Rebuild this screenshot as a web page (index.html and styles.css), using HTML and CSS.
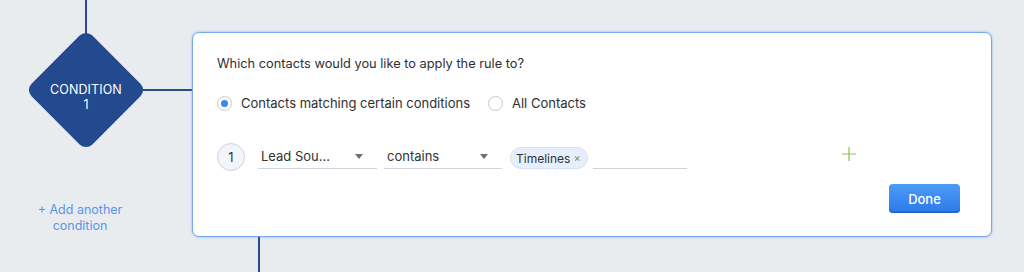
FILE: index.html
```html
<!DOCTYPE html>
<html>
<head>
<meta charset="utf-8">
<link rel="stylesheet" href="styles.css">
</head>
<body>
<div class="canvas">
  <div class="flow">
    <div class="vline-top"></div>
    <div class="node-row">
      <div class="diamond-box">
        <div class="diamond"></div>
        <div class="diamond-label">CONDITION<br>1</div>
      </div>
      <div class="hline"></div>
    </div>
    <a class="add-link">+ Add another<br>condition</a>
  </div>
  <div class="main">
    <div class="card">
      <p class="question">Which contacts would you like to apply the rule to?</p>
      <div class="radios">
        <label class="radio"><span class="radio-dot checked"></span>Contacts matching certain conditions</label>
        <label class="radio"><span class="radio-dot"></span>All Contacts</label>
      </div>
      <div class="cond-row">
        <span class="num">1</span>
        <div class="select sel-field"><span>Lead Sou...</span><span class="caret"></span></div>
        <div class="select sel-op"><span>contains</span><span class="caret"></span></div>
        <div class="chip">Timelines <span class="chip-x">×</span></div>
        <div class="value-input"></div>
        <svg class="plus" width="14" height="14" viewBox="0 0 14 14"><path d="M7 0V14M0 7H14" stroke="#8cc152" stroke-width="1.2" fill="none"/></svg>
      </div>
      <div class="actions"><button class="done">Done</button></div>
    </div>
    <div class="vline-bottom"></div>
  </div>
</div>
</body>
</html>
```

FILE: styles.css
```css
* { box-sizing: border-box; }
html, body { margin: 0; padding: 0; }
body {
  width: 1024px;
  height: 272px;
  overflow: hidden;
  background: #e9ecef;
  font-family: Inter, "Noto Sans", sans-serif;
  color: #333;
}
.canvas {
  display: flex;
  height: 272px;
}
.flow {
  width: 192px;
  display: flex;
  flex-direction: column;
}
.vline-top {
  width: 2px;
  height: 36px;
  margin-left: 85px;
  background: #2c4a8c;
}
.node-row {
  display: flex;
  align-items: center;
  height: 112px;
  margin-top: -2px;
}
.diamond-box {
  width: 114px;
  height: 114px;
  margin-left: 29px;
  position: relative;
  display: flex;
  align-items: center;
  justify-content: center;
}
.diamond {
  position: absolute;
  width: 86px;
  height: 86px;
  border-radius: 9px;
  background: #234a8e;
  transform: rotate(45deg);
}
.diamond-label {
  position: relative;
  top: 7px;
  color: #fff;
  font-size: 12.5px;
  line-height: 15px;
  text-align: center;
  letter-spacing: 0.1px;
}
.hline {
  flex: 1;
  height: 2px;
  background: #2c4a8c;
}
.add-link {
  display: block;
  width: 160px;
  margin-top: 56px;
  text-align: center;
  color: #5a94ea;
  font-size: 12.5px;
  line-height: 15.5px;
}
.main {
  display: flex;
  flex-direction: column;
  width: 800px;
  padding-top: 32px;
}
.card {
  width: 800px;
  height: 205px;
  background: #fff;
  border: 1px solid #76a6ef;
  border-radius: 7px;
  box-shadow: 0 0 3px rgba(90, 150, 240, 0.6);
  padding: 22px 31px 0 24px;
}
.question {
  margin: 0;
  font-size: 12.8px;
  line-height: 18px;
  color: #2f2f33;
}
.radios {
  display: flex;
  gap: 18px;
  margin-top: 21px;
  font-size: 13px;
  line-height: 18px;
}
.radio {
  display: flex;
  align-items: center;
  gap: 9px;
  color: #2f2f33;
}
.radio-dot {
  width: 15px;
  height: 15px;
  border-radius: 50%;
  border: 1.5px solid #c8c9cc;
  display: flex;
  align-items: center;
  justify-content: center;
}
.radio-dot.checked::after {
  content: "";
  width: 7px;
  height: 7px;
  border-radius: 50%;
  background: #3d85f0;
}
.cond-row {
  display: flex;
  align-items: center;
  margin-top: 31px;
  height: 28px;
  font-size: 13px;
}
.num {
  width: 28px;
  height: 28px;
  border-radius: 50%;
  border: 1px solid #cdd2dc;
  background: #f3f5fa;
  display: flex;
  align-items: center;
  justify-content: center;
  color: #333;
  font-size: 13px;
}
.select {
  align-self: flex-start;
  display: flex;
  align-items: center;
  justify-content: space-between;
  height: 25px;
  margin-top: 1px;
  padding: 0 14px 0 3px;
  border-bottom: 1px solid #cfd2d8;
  color: #333;
}
.sel-field { width: 119px; margin-left: 13px; }
.sel-op { width: 118px; margin-left: 7px; }
.caret {
  width: 0;
  height: 0;
  border-left: 4px solid transparent;
  border-right: 4px solid transparent;
  border-top: 5px solid #6e7076;
}
.chip {
  align-self: flex-start;
  margin-left: 8px;
  margin-top: 4px;
  height: 22px;
  padding: 0 6px 0 5px;
  border-radius: 11px;
  background: #e7effc;
  border: 1px solid #d3e0f5;
  display: flex;
  align-items: center;
  gap: 3px;
  color: #333;
  font-size: 12px;
}
.chip-x {
  color: #888;
  font-size: 11px;
}
.value-input {
  align-self: flex-start;
  width: 94px;
  height: 25px;
  margin-top: 1px;
  margin-left: 5px;
  border-bottom: 1px solid #cfd2d8;
}
.plus {
  margin-left: 155px;
  margin-top: -6px;
}
.actions {
  display: flex;
  justify-content: flex-end;
  margin-top: 13px;
}
.done {
  width: 71px;
  height: 29px;
  border: none;
  border-radius: 4px;
  background: linear-gradient(#4b9cf6, #2d79e9);
  box-shadow: inset 0 -2px 0 #2566cf;
  color: #fff;
  font-family: Inter, "Noto Sans", sans-serif;
  font-size: 13px;
  font-weight: 500;
}
.vline-bottom {
  flex: 1;
  width: 2px;
  margin-left: 66px;
  background: #2c4a8c;
}
```
